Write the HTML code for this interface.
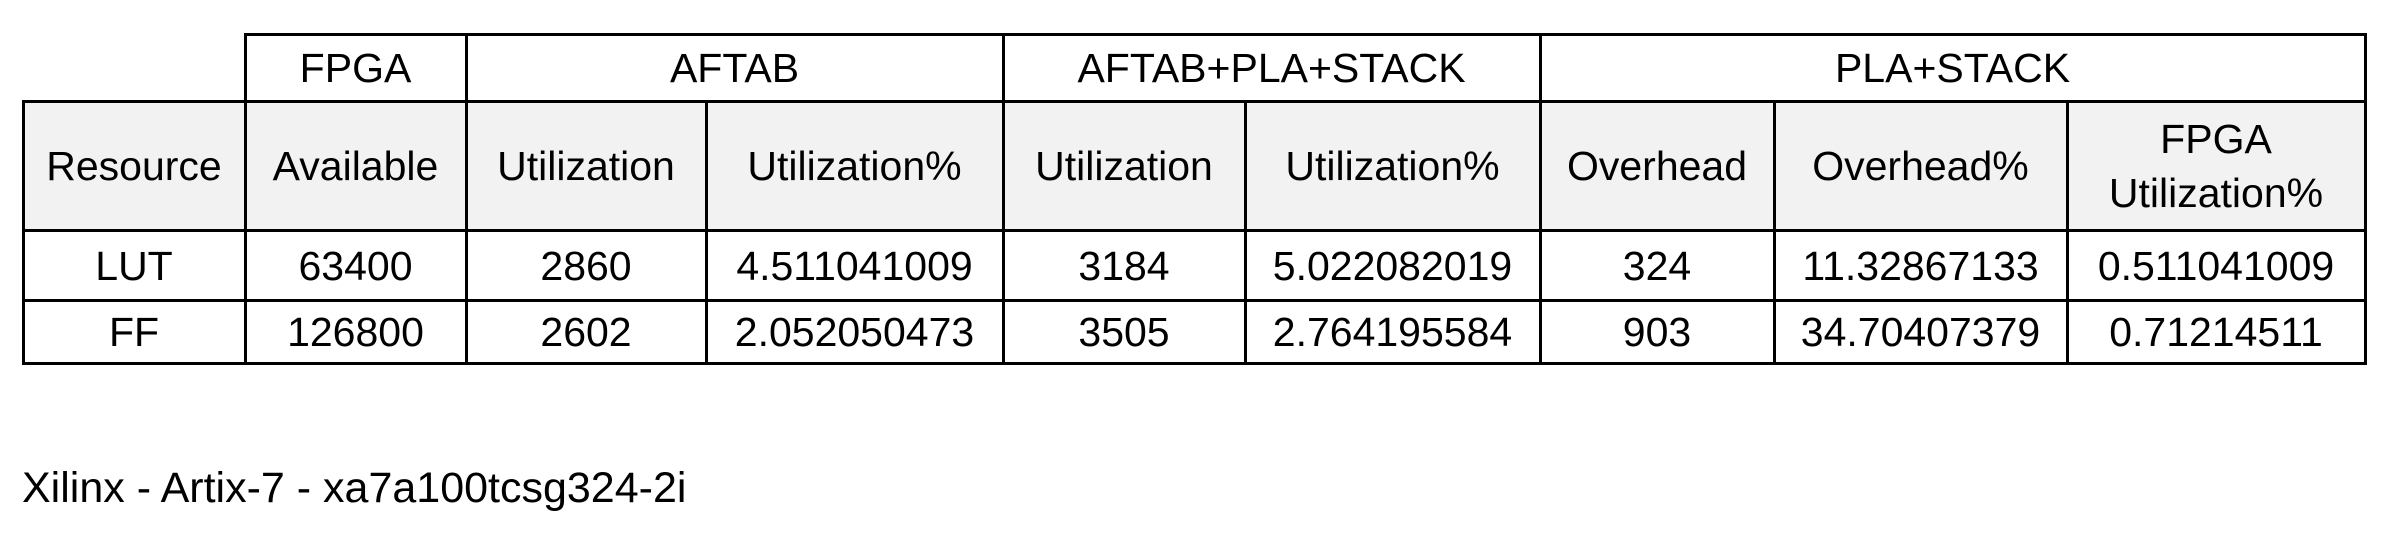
<!DOCTYPE html>
<html><head><meta charset="utf-8"><style>
body{margin:0;width:2400px;height:534px;background:#fff;position:relative;overflow:hidden;font-family:"Liberation Sans",sans-serif;color:#000}
.l{position:absolute;background:#000}
.c{position:absolute;display:flex;align-items:center;justify-content:center;text-align:center;font-size:41px;line-height:54px}
.g{position:absolute;background:#f2f2f2}
</style></head><body>
<div class="g" style="left:23px;top:101px;width:2343px;height:130px"></div>
<div class="l" style="left:244px;top:33px;width:2123px;height:3px"></div>
<div class="l" style="left:22px;top:100px;width:2345px;height:3px"></div>
<div class="l" style="left:22px;top:229px;width:2345px;height:3px"></div>
<div class="l" style="left:22px;top:299px;width:2345px;height:3px"></div>
<div class="l" style="left:22px;top:362px;width:2345px;height:3px"></div>
<div class="l" style="left:22px;top:100px;width:3px;height:265px"></div>
<div class="l" style="left:244px;top:33px;width:3px;height:332px"></div>
<div class="l" style="left:465px;top:33px;width:3px;height:332px"></div>
<div class="l" style="left:705px;top:100px;width:3px;height:265px"></div>
<div class="l" style="left:1002px;top:33px;width:3px;height:332px"></div>
<div class="l" style="left:1244px;top:100px;width:3px;height:265px"></div>
<div class="l" style="left:1539px;top:33px;width:3px;height:332px"></div>
<div class="l" style="left:1773px;top:100px;width:3px;height:265px"></div>
<div class="l" style="left:2066px;top:100px;width:3px;height:265px"></div>
<div class="l" style="left:2364px;top:33px;width:3px;height:332px"></div>
<div class="c" style="left:245px;top:36px;width:221px;height:64px">FPGA</div>
<div class="c" style="left:466px;top:36px;width:537px;height:64px">AFTAB</div>
<div class="c" style="left:1003px;top:36px;width:537px;height:64px">AFTAB+PLA+STACK</div>
<div class="c" style="left:1540px;top:36px;width:825px;height:64px">PLA+STACK</div>
<div class="c" style="left:23px;top:103px;width:222px;height:126px">Resource</div>
<div class="c" style="left:245px;top:103px;width:221px;height:126px">Available</div>
<div class="c" style="left:466px;top:103px;width:240px;height:126px">Utilization</div>
<div class="c" style="left:706px;top:103px;width:297px;height:126px">Utilization%</div>
<div class="c" style="left:1003px;top:103px;width:242px;height:126px">Utilization</div>
<div class="c" style="left:1245px;top:103px;width:295px;height:126px">Utilization%</div>
<div class="c" style="left:1540px;top:103px;width:234px;height:126px">Overhead</div>
<div class="c" style="left:1774px;top:103px;width:293px;height:126px">Overhead%</div>
<div class="c" style="left:2067px;top:103px;width:298px;height:126px">FPGA<br>Utilization%</div>
<div class="c" style="left:23px;top:232px;width:222px;height:67px">LUT</div>
<div class="c" style="left:245px;top:232px;width:221px;height:67px">63400</div>
<div class="c" style="left:466px;top:232px;width:240px;height:67px">2860</div>
<div class="c" style="left:706px;top:232px;width:297px;height:67px">4.511041009</div>
<div class="c" style="left:1003px;top:232px;width:242px;height:67px">3184</div>
<div class="c" style="left:1245px;top:232px;width:295px;height:67px">5.022082019</div>
<div class="c" style="left:1540px;top:232px;width:234px;height:67px">324</div>
<div class="c" style="left:1774px;top:232px;width:293px;height:67px">11.32867133</div>
<div class="c" style="left:2067px;top:232px;width:298px;height:67px">0.511041009</div>
<div class="c" style="left:23px;top:302px;width:222px;height:60px">FF</div>
<div class="c" style="left:245px;top:302px;width:221px;height:60px">126800</div>
<div class="c" style="left:466px;top:302px;width:240px;height:60px">2602</div>
<div class="c" style="left:706px;top:302px;width:297px;height:60px">2.052050473</div>
<div class="c" style="left:1003px;top:302px;width:242px;height:60px">3505</div>
<div class="c" style="left:1245px;top:302px;width:295px;height:60px">2.764195584</div>
<div class="c" style="left:1540px;top:302px;width:234px;height:60px">903</div>
<div class="c" style="left:1774px;top:302px;width:293px;height:60px">34.70407379</div>
<div class="c" style="left:2067px;top:302px;width:298px;height:60px">0.71214511</div>
<div style="position:absolute;left:22px;top:460px;font-size:43px;line-height:56px">Xilinx - Artix-7 - xa7a100tcsg324-2i</div>
</body></html>
